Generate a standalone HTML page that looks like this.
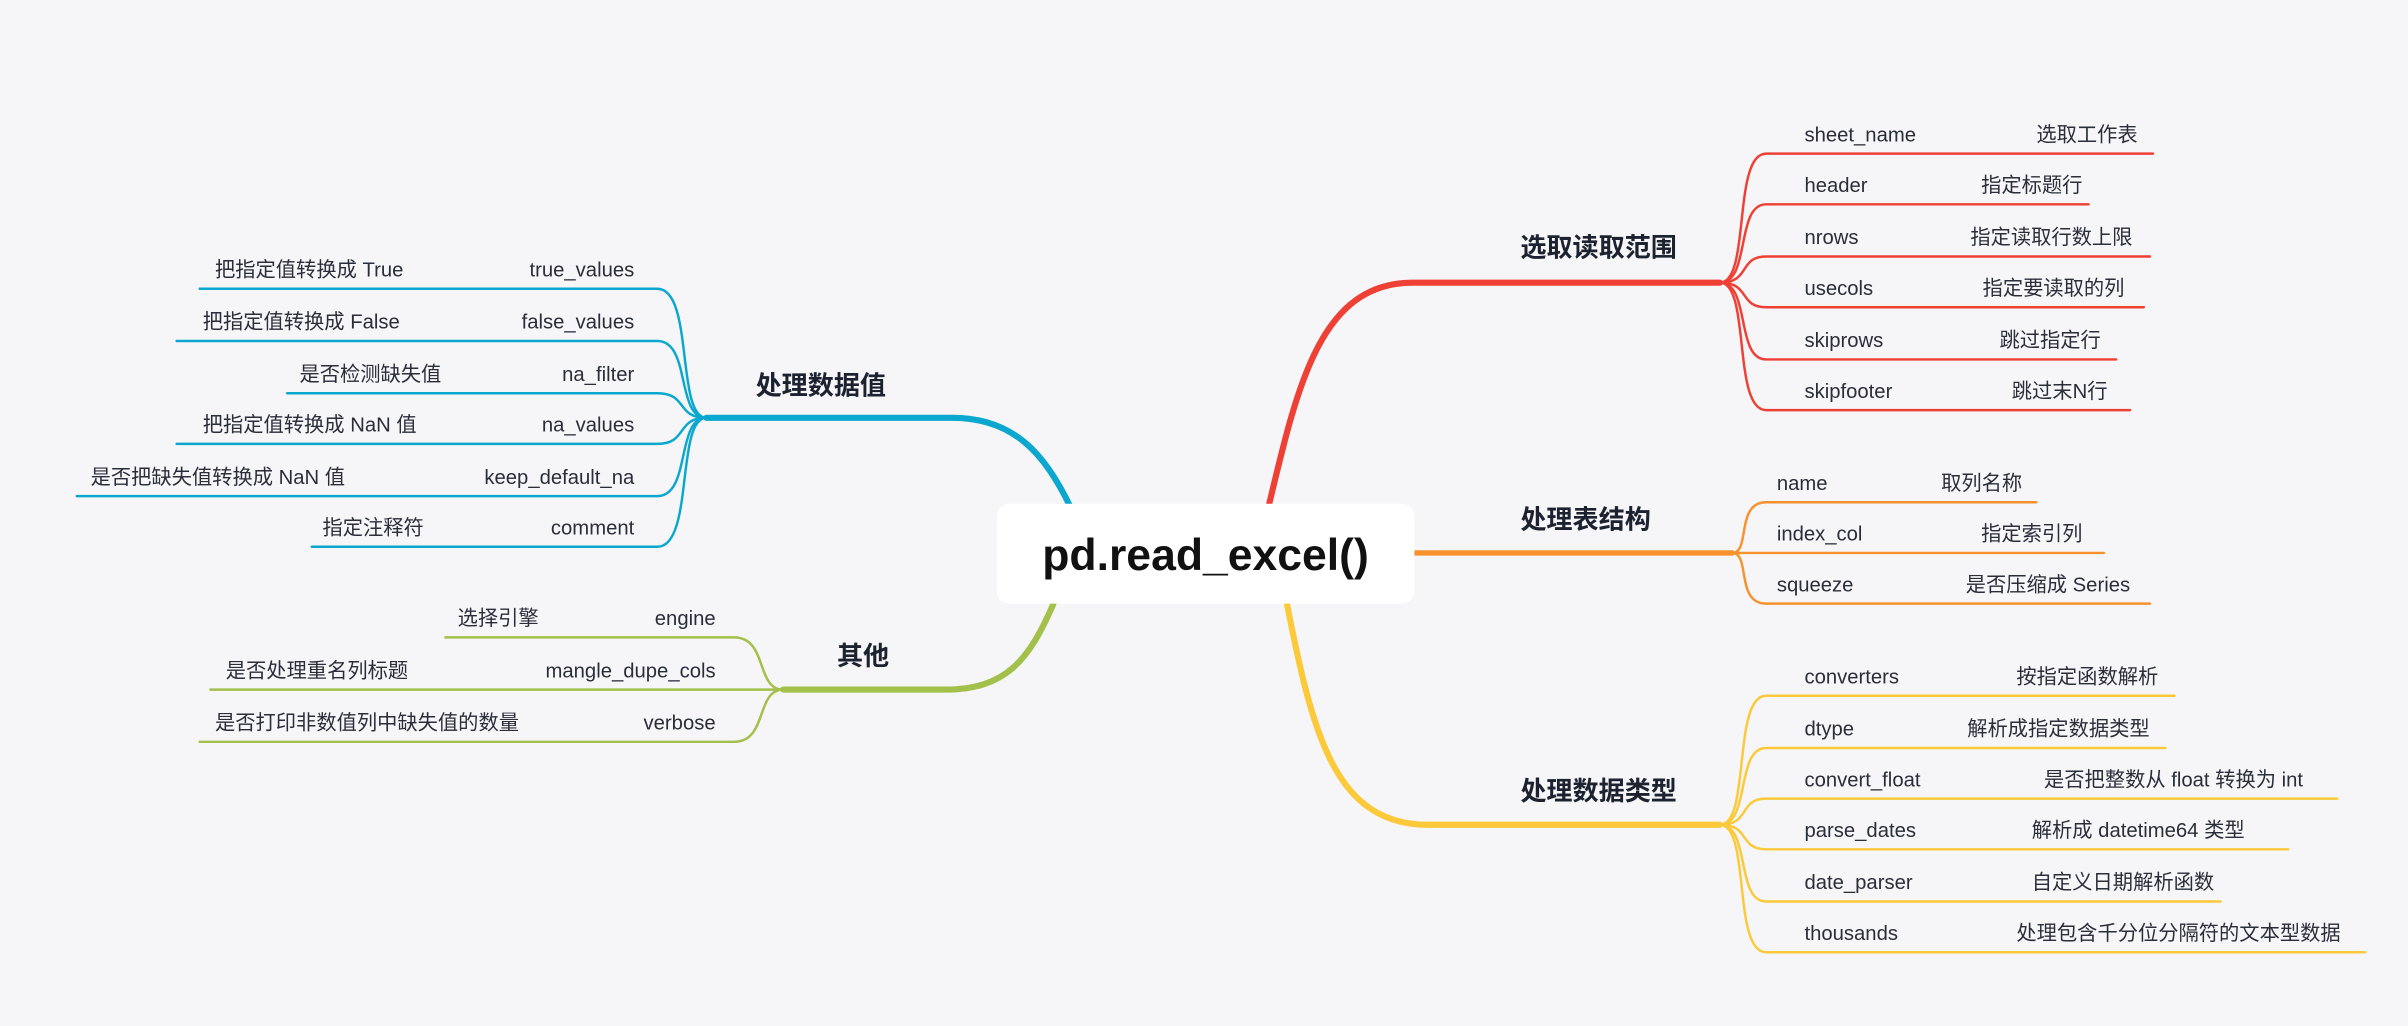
<!DOCTYPE html>
<html><head><meta charset="utf-8"><style>
html,body{margin:0;padding:0;background:#f6f6f8;}
svg{display:block}
text{font-family:"Liberation Sans","Noto Sans CJK SC",sans-serif;}
.c{font-size:13.2px;fill:#2a2e3a;font-family:"DejaVu Sans","Noto Sans CJK SC",sans-serif}
.b{font-size:17px;font-weight:bold;fill:#1c2230}
</style></head><body>
<svg width="2408" height="1026" viewBox="0 0 1568 668" xmlns="http://www.w3.org/2000/svg">
<rect width="1568" height="668" fill="#f6f6f8"/>
<g fill="none" stroke-linecap="round">
<path d="M826 330 C845 250 860 184 920 184 L1120 184" stroke="#ee4035" stroke-width="4"/>
<g stroke="#ee4035" stroke-width="1.6">
<path d="M1120 184 C1140 184 1128 100 1150 100 L1402 100"/>
<path d="M1120 184 C1140 184 1130 133 1150 133 L1360 133"/>
<path d="M1120 184 C1140 184 1132 167 1150 167 L1400 167"/>
<path d="M1120 184 C1140 184 1132 200 1150 200 L1396 200"/>
<path d="M1120 184 C1140 184 1130 234 1150 234 L1378 234"/>
<path d="M1120 184 C1140 184 1128 267 1150 267 L1387 267"/>
</g>
<path d="M921 360 L1128 360" stroke="#f7922f" stroke-width="3.5"/>
<g stroke="#f7922f" stroke-width="1.6">
<path d="M1128 360 C1140 360 1130 327 1150 327 L1326 327"/>
<path d="M1128 360 L1370 360"/>
<path d="M1128 360 C1140 360 1130 393 1150 393 L1400 393"/>
</g>
<path d="M838 393 C855 480 870 537 930 537 L1120 537" stroke="#fcc93a" stroke-width="4"/>
<g stroke="#fcc93a" stroke-width="1.6">
<path d="M1120 537 C1140 537 1128 453 1150 453 L1416 453"/>
<path d="M1120 537 C1140 537 1130 487 1150 487 L1410 487"/>
<path d="M1120 537 C1140 537 1132 520 1150 520 L1522 520"/>
<path d="M1120 537 C1140 537 1132 553 1150 553 L1490 553"/>
<path d="M1120 537 C1140 537 1130 587 1150 587 L1446 587"/>
<path d="M1120 537 C1140 537 1128 620 1150 620 L1540 620"/>
</g>
<path d="M697 330 C680 295 660 272 620 272 L460 272" stroke="#0ba7cf" stroke-width="4"/>
<g stroke="#0ba7cf" stroke-width="1.6">
<path d="M460 272 C440 272 452 188 428 188 L130 188"/>
<path d="M460 272 C440 272 450 222 428 222 L115 222"/>
<path d="M460 272 C440 272 448 256 428 256 L187 256"/>
<path d="M460 272 C440 272 448 289 428 289 L115 289"/>
<path d="M460 272 C440 272 450 323 428 323 L50 323"/>
<path d="M460 272 C440 272 452 356 428 356 L203 356"/>
</g>
<path d="M686 393 C670 430 655 449 615 449 L510 449" stroke="#a2c04a" stroke-width="4"/>
<g stroke="#a2c04a" stroke-width="1.6">
<path d="M510 449 C492 449 500 415 478 415 L290 415"/>
<path d="M510 449 L137 449"/>
<path d="M510 449 C492 449 500 483 478 483 L130 483"/>
</g>
</g>
<rect x="649" y="328" width="272" height="65" rx="8" fill="#ffffff"/>
<text x="785" y="371" text-anchor="middle" style="font-size:29px;font-weight:bold;fill:#111">pd.read_excel()</text>
<text class="b" x="990" y="167">选取读取范围</text>
<text class="b" x="990" y="344">处理表结构</text>
<text class="b" x="990" y="521">处理数据类型</text>
<text class="b" x="492" y="257">处理数据值</text>
<text class="b" x="545" y="433">其他</text>
<g class="c">
<text x="1175" y="92">sheet_name</text><text x="1326" y="92">选取工作表</text>
<text x="1175" y="125">header</text><text x="1290" y="125">指定标题行</text>
<text x="1175" y="159">nrows</text><text x="1283" y="159">指定读取行数上限</text>
<text x="1175" y="192">usecols</text><text x="1291" y="192">指定要读取的列</text>
<text x="1175" y="226">skiprows</text><text x="1302" y="226">跳过指定行</text>
<text x="1175" y="259">skipfooter</text><text x="1310" y="259">跳过末N行</text>
<text x="1157" y="319">name</text><text x="1264" y="319">取列名称</text>
<text x="1157" y="352">index_col</text><text x="1290" y="352">指定索引列</text>
<text x="1157" y="385">squeeze</text><text x="1280" y="385">是否压缩成 Series</text>
<text x="1175" y="445">converters</text><text x="1313" y="445">按指定函数解析</text>
<text x="1175" y="479">dtype</text><text x="1281" y="479">解析成指定数据类型</text>
<text x="1175" y="512">convert_float</text><text x="1331" y="512">是否把整数从 float 转换为 int</text>
<text x="1175" y="545">parse_dates</text><text x="1323" y="545">解析成  datetime64 类型</text>
<text x="1175" y="579">date_parser</text><text x="1323" y="579">自定义日期解析函数</text>
<text x="1175" y="612">thousands</text><text x="1313" y="612">处理包含千分位分隔符的文本型数据</text>
</g>
<g class="c">
<text x="140" y="180">把指定值转换成 True</text><text x="413" y="180" text-anchor="end">true_values</text>
<text x="132" y="214">把指定值转换成 False</text><text x="413" y="214" text-anchor="end">false_values</text>
<text x="195" y="248">是否检测缺失值</text><text x="413" y="248" text-anchor="end">na_filter</text>
<text x="132" y="281">把指定值转换成 NaN 值</text><text x="413" y="281" text-anchor="end">na_values</text>
<text x="59" y="315">是否把缺失值转换成 NaN 值</text><text x="413" y="315" text-anchor="end">keep_default_na</text>
<text x="210" y="348">指定注释符</text><text x="413" y="348" text-anchor="end">comment</text>
<text x="298" y="407">选择引擎</text><text x="466" y="407" text-anchor="end">engine</text>
<text x="147" y="441">是否处理重名列标题</text><text x="466" y="441" text-anchor="end">mangle_dupe_cols</text>
<text x="140" y="475">是否打印非数值列中缺失值的数量</text><text x="466" y="475" text-anchor="end">verbose</text>
</g>
</svg>
</body></html>
